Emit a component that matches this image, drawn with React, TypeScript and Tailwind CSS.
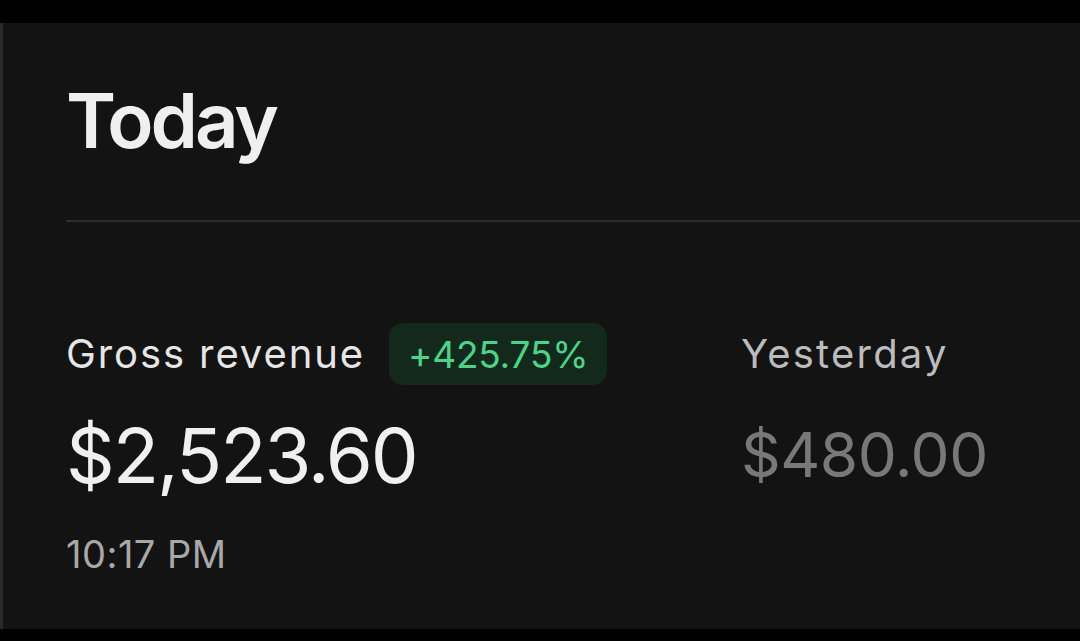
import React from "react";

export default function App() {
  return (
    <div
      className="w-[1080px] h-[641px] bg-black pt-[23px] pb-[12px] overflow-hidden"
      style={{ fontFamily: "Inter, 'Noto Sans', sans-serif" }}
    >
      <div className="h-full bg-[#131313] border-l-[3px] border-[#2b2b2b] pl-[63px]">
        <div className="pt-[59px] h-[140px]">
          <h1 className="text-[76px] leading-none font-semibold text-[#efefef] tracking-[-3px]">Today</h1>
        </div>
        <div className="mt-[57px] h-[2px] bg-[#2e2e2e]" />
        <div className="flex mt-[101px]">
          <div className="w-[675px]">
            <div className="flex items-center gap-[24px] h-[62px]">
              <span className="text-[40px] leading-none text-[#e6e6e6] tracking-[1.9px]">Gross revenue</span>
              <span className="h-[62px] px-[19px] flex items-center rounded-[14px] bg-[#13291c] text-[37px] leading-none text-[#4bd48a] tracking-[-0.2px]">
                +425.75%
              </span>
            </div>
            <div className="mt-[32px] text-[76px] leading-none text-[#f0f0f0] tracking-[-2px]">$2,523.60</div>
            <div className="mt-[42px] text-[38px] leading-none text-[#a8a8a8] tracking-[0.5px]">10:17 PM</div>
          </div>
          <div>
            <div className="flex items-center h-[62px]">
              <span className="text-[40px] leading-none text-[#bcbcbc] tracking-[2.2px]">Yesterday</span>
            </div>
            <div className="mt-[39px] text-[62px] leading-none text-[#787878] tracking-[-0.5px]">$480.00</div>
          </div>
        </div>
      </div>
    </div>
  );
}
